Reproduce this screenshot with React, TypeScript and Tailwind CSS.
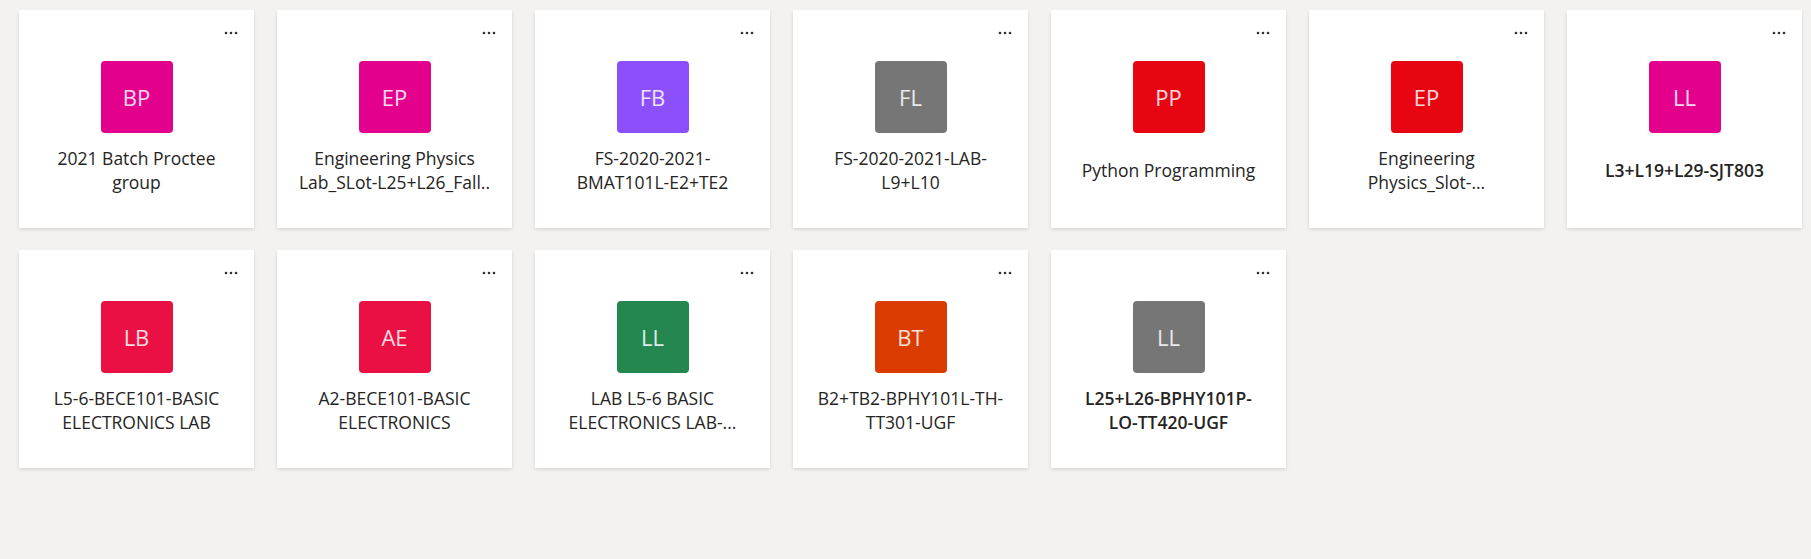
type Team = {
  initials: string;
  color: string;
  lines: string[];
  bold?: boolean;
};

const teams: Team[] = [
  { initials: "BP", color: "bg-[#e3008c]", lines: ["2021 Batch Proctee", "group"] },
  { initials: "EP", color: "bg-[#e3008c]", lines: ["Engineering Physics", "Lab_SLot-L25+L26_Fall.."] },
  { initials: "FB", color: "bg-[#8b50fc]", lines: ["FS-2020-2021-", "BMAT101L-E2+TE2"] },
  { initials: "FL", color: "bg-[#767676]", lines: ["FS-2020-2021-LAB-", "L9+L10"] },
  { initials: "PP", color: "bg-[#e80512]", lines: ["Python Programming"] },
  { initials: "EP", color: "bg-[#e80512]", lines: ["Engineering", "Physics_Slot-..."] },
  { initials: "LL", color: "bg-[#e3008c]", lines: ["L3+L19+L29-SJT803"], bold: true },
  { initials: "LB", color: "bg-[#ea1043]", lines: ["L5-6-BECE101-BASIC", "ELECTRONICS LAB"] },
  { initials: "AE", color: "bg-[#ea1043]", lines: ["A2-BECE101-BASIC", "ELECTRONICS"] },
  { initials: "LL", color: "bg-[#23874f]", lines: ["LAB L5-6 BASIC", "ELECTRONICS LAB-..."] },
  { initials: "BT", color: "bg-[#da3b01]", lines: ["B2+TB2-BPHY101L-TH-", "TT301-UGF"] },
  { initials: "LL", color: "bg-[#767676]", lines: ["L25+L26-BPHY101P-", "LO-TT420-UGF"], bold: true },
];

function MoreDots() {
  return (
    <svg width="14" height="4" viewBox="0 0 14 4" className="absolute right-[16px] top-[21px]">
      <circle cx="2" cy="2" r="1.3" fill="#323130" />
      <circle cx="7" cy="2" r="1.3" fill="#323130" />
      <circle cx="12" cy="2" r="1.3" fill="#323130" />
    </svg>
  );
}

function TeamCard({ team }: { team: Team }) {
  return (
    <div className="relative flex h-[218px] w-[235px] flex-col items-center bg-white shadow-[0_1.6px_3.6px_rgba(0,0,0,0.13),0_0.3px_0.9px_rgba(0,0,0,0.11)]">
      <MoreDots />
      <div
        className={`${team.color} mt-[51px] flex h-[72px] w-[72px] items-center justify-center rounded-[4px] text-[22px] text-white/85`}
      >
        {team.initials}
      </div>
      <div
        className={`mt-[13px] flex h-[48px] w-full flex-col items-center justify-center text-center text-[17.5px] leading-[24px] text-[#252423] ${
          team.bold ? "font-semibold" : ""
        }`}
      >
        {team.lines.map((l, i) => (
          <span key={i} className="whitespace-nowrap">
            {l}
          </span>
        ))}
      </div>
    </div>
  );
}

export default function App() {
  return (
    <div className="min-h-[559px] bg-[#f3f2f1] pl-[19px] pt-[10px] font-['Open_Sans','Noto_Sans',sans-serif]">
      <div className="grid grid-cols-[repeat(7,235px)] gap-x-[23px] gap-y-[22px]">
        {teams.map((t, i) => (
          <TeamCard key={i} team={t} />
        ))}
      </div>
    </div>
  );
}
